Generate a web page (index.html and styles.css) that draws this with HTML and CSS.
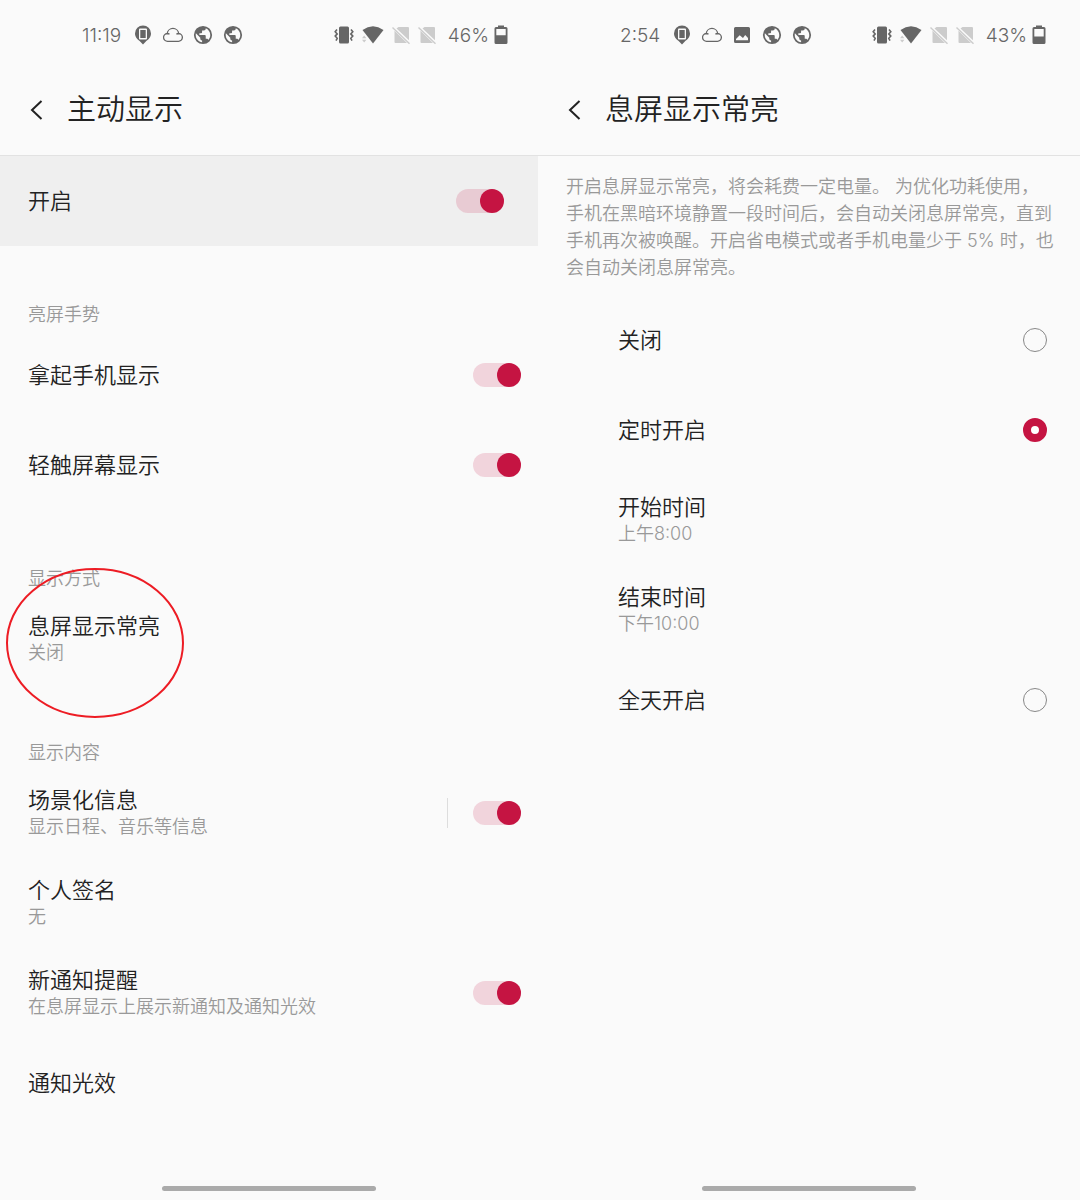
FILE: index.html
```html
<!DOCTYPE html>
<html lang="zh-CN">
<head>
  <meta charset="UTF-8" />
  <title>主动显示</title>
  <meta name="viewport" content="width=device-width, initial-scale=1.0" />
  <link rel="stylesheet" href="styles.css">
</head>
<body>

<!-- Icons -->
<svg class="sprite" aria-hidden="true">
  <symbol id="i-pin" viewBox="0 0 20 20">
    <path fill-rule="evenodd" d="M10 .5a8 8 0 0 0-8 8c0 4.200 3.200 6.300 5.600 8.400L10 19.500l2.400-2.600C14.800 14.800 18 12.700 18 8.500a8 8 0 0 0-8-8zM7 3.500h6q1 0 1 1v9q0 1-1 1H7q-1 0-1-1v-9q0-1 1-1zM7.300 5v8h5.400V5z"/>
    <path d="M8.300 5.800h3.400v6.400H8.300z"/>
  </symbol>
  <symbol id="i-cloud" viewBox="0 0 20 20">
    <path fill="none" stroke="currentColor" stroke-width="1.300" d="M4.800 16.300h10.400a3.900 3.900 0 0 0 .5-7.800 5.800 5.800 0 0 0-11.500 0 3.900 3.900 0 0 0 .6 7.800zM15.700 8.500c-1 0-1.700.2-2.300.7M4.200 8.500c1 0 1.700.2 2.300.7"/>
  </symbol>
  <symbol id="i-globe" viewBox="1 1 22 22">
    <path d="M17.900 17.390C17.640 16.590 16.890 16 16 16H15V13A1 1 0 0 0 14 12H8V10H10A1 1 0 0 0 11 9V7H13A2 2 0 0 0 15 5V4.590C17.930 5.770 20 8.640 20 12C20 14.080 19.200 15.970 17.900 17.390M11 19.930C7.050 19.440 4 16.080 4 12C4 11.380 4.080 10.780 4.210 10.210L9 15V16A2 2 0 0 0 11 18M12 2A10 10 0 0 0 2 12A10 10 0 0 0 12 22A10 10 0 0 0 22 12A10 10 0 0 0 12 2Z"/>
  </symbol>
  <symbol id="i-image" viewBox="0 0 20 20">
    <path fill-rule="evenodd" d="M3.500 2h13Q18 2 18 3.500v13q0 1.500-1.500 1.500h-13Q2 18 2 16.500v-13Q2 2 3.500 2zM4 15.300h12V13l-2.800-3-2.200 3-3.300-2.800L4 14z"/>
  </symbol>
  <symbol id="i-vibrate" viewBox="0 0 20 20">
    <rect x="5" y="1.500" width="10" height="17" rx="1.500"/>
    <path fill="none" stroke="currentColor" stroke-width="1.600" d="M3 4.500 1.200 6.700l2 2.200-2 2.200 2 2.200L2 15.600M17 4.500l1.800 2.200-2 2.200 2 2.200-2 2.200 1.200 2.300"/>
  </symbol>
  <symbol id="i-wifi" viewBox="0 0 22 20">
    <path d="M.5 5Q11-2.400 21.500 5L11 18.500z"/>
    <path fill="#ccc" d="M0 13.300l2.200-2.800 2.200 2.800zM0 14.700h4.400l-2.200 2.800z"/>
  </symbol>
  <symbol id="i-nosim" viewBox="0 0 18 20">
    <path fill="#ccc" d="M6.500 2H16q1 0 1 1v12.300L4.500 3.500zM2.500 5.800 15 18H3.500q-1 0-1-1z"/>
    <path fill="none" stroke="#ccc" stroke-width="1.400" d="M.5 2.500l17 16.300"/>
  </symbol>
  <symbol id="i-battery46" viewBox="0 0 14 20">
    <path fill-rule="evenodd" d="M4 .5h6V2h2q1.500 0 1.500 1.500v14Q13.500 19 12 19H2Q.5 19 .5 17.500v-14Q.5 2 2 2h2zM2.300 4v6.300h9.400V4z"/>
  </symbol>
  <symbol id="i-battery43" viewBox="0 0 14 20">
    <path fill-rule="evenodd" d="M4 .5h6V2h2q1.500 0 1.500 1.500v14Q13.500 19 12 19H2Q.5 19 .5 17.500v-14Q.5 2 2 2h2zM2.300 4v7.500h9.400V4z"/>
  </symbol>
  <symbol id="i-back" viewBox="0 0 20 22">
    <path fill="none" stroke="currentColor" stroke-width="2" d="M14.500 2 5 11l9.500 9"/>
  </symbol>
</svg>

<div class="screens">

  <!-- Ambient display -->
  <main class="phone">
    <div class="status">
      <span>11:19</span>
      <div class="notices">
        <svg class="icon"><use href="#i-pin"/></svg>
        <svg class="icon"><use href="#i-cloud"/></svg>
        <svg class="icon"><use href="#i-globe"/></svg>
        <svg class="icon"><use href="#i-globe"/></svg>
      </div>
      <div class="system">
        <svg class="icon"><use href="#i-vibrate"/></svg>
        <svg class="icon icon-wifi"><use href="#i-wifi"/></svg>
        <svg class="icon icon-sim"><use href="#i-nosim"/></svg>
        <svg class="icon icon-sim"><use href="#i-nosim"/></svg>
        <div class="charge">
          <span>46%</span>
          <svg class="icon icon-battery"><use href="#i-battery46"/></svg>
        </div>
      </div>
    </div>

    <header class="header">
      <button class="back" aria-label="返回"><svg class="back-icon"><use href="#i-back"/></svg></button>
      <h1>主动显示</h1>
    </header>

    <label class="row row-main">
      <span class="name">开启</span>
      <input class="switch" type="checkbox" checked>
    </label>

    <h2>亮屏手势</h2>
    <label class="row">
      <span class="name">拿起手机显示</span>
      <input class="switch" type="checkbox" checked>
    </label>
    <label class="row">
      <span class="name">轻触屏幕显示</span>
      <input class="switch" type="checkbox" checked>
    </label>

    <h2>显示方式</h2>
    <button class="row">
      <span class="text">
        <span class="name">息屏显示常亮</span>
        <span class="desc">关闭</span>
      </span>
      <svg class="mark" viewBox="0 0 178 150"><ellipse cx="89" cy="75" rx="88" ry="74"/></svg>
    </button>

    <h2>显示内容</h2>
    <label class="row">
      <span class="text">
        <span class="name">场景化信息</span>
        <span class="desc">显示日程、音乐等信息</span>
      </span>
      <span class="divider"></span>
      <input class="switch" type="checkbox" checked>
    </label>
    <button class="row">
      <span class="text">
        <span class="name">个人签名</span>
        <span class="desc">无</span>
      </span>
    </button>
    <label class="row">
      <span class="text">
        <span class="name">新通知提醒</span>
        <span class="desc">在息屏显示上展示新通知及通知光效</span>
      </span>
      <input class="switch" type="checkbox" checked>
    </label>
    <button class="row">
      <span class="name">通知光效</span>
    </button>

    <div class="home-bar"></div>
  </main>

  <!-- Always-on schedule -->
  <main class="phone phone-schedule">
    <div class="status">
      <span>2:54</span>
      <div class="notices">
        <svg class="icon"><use href="#i-pin"/></svg>
        <svg class="icon"><use href="#i-cloud"/></svg>
        <svg class="icon"><use href="#i-image"/></svg>
        <svg class="icon"><use href="#i-globe"/></svg>
        <svg class="icon"><use href="#i-globe"/></svg>
      </div>
      <div class="system">
        <svg class="icon"><use href="#i-vibrate"/></svg>
        <svg class="icon icon-wifi"><use href="#i-wifi"/></svg>
        <svg class="icon icon-sim"><use href="#i-nosim"/></svg>
        <svg class="icon icon-sim"><use href="#i-nosim"/></svg>
        <div class="charge">
          <span>43%</span>
          <svg class="icon icon-battery"><use href="#i-battery43"/></svg>
        </div>
      </div>
    </div>

    <header class="header">
      <button class="back" aria-label="返回"><svg class="back-icon"><use href="#i-back"/></svg></button>
      <h1>息屏显示常亮</h1>
    </header>

    <p class="intro">开启息屏显示常亮，将会耗费一定电量。 为优化功耗使用，手机在黑暗环境静置一段时间后，会自动关闭息屏常亮，直到手机再次被唤醒。开启省电模式或者手机电量少于 5% 时，也会自动关闭息屏常亮。</p>

    <label class="row">
      <span class="name">关闭</span>
      <input class="radio" type="radio" name="mode">
    </label>
    <label class="row">
      <span class="name">定时开启</span>
      <input class="radio" type="radio" name="mode" checked>
    </label>
    <button class="row">
      <span class="text">
        <span class="name">开始时间</span>
        <span class="desc">上午8:00</span>
      </span>
    </button>
    <button class="row">
      <span class="text">
        <span class="name">结束时间</span>
        <span class="desc">下午10:00</span>
      </span>
    </button>
    <label class="row">
      <span class="name">全天开启</span>
      <input class="radio" type="radio" name="mode">
    </label>

    <div class="home-bar"></div>
  </main>

</div>
</body>
</html>
```

FILE: styles.css
```css
* {
  box-sizing: border-box;
}

body {
  margin: 0;
  background: #fafafa;
  color: #222;
  font-family: Inter, "Noto Sans CJK SC", sans-serif;
  font-weight: 350;
}

button {
  border: none;
  background: none;
  padding: 0;
  color: inherit;
  font: inherit;
  text-align: left;
  cursor: pointer;
}

.sprite {
  position: absolute;
  width: 0;
  height: 0;
}

.screens {
  display: grid;
  grid-template-columns: 538fr 542fr;
  min-height: 100vh;
}

.phone {
  display: flex;
  flex-direction: column;
  min-width: 0;
}

/* status bar */
.status {
  display: flex;
  align-items: center;
  height: 70px;
  padding: 0 30px 0 82px;
  color: #666;
  font-size: 19px;
  font-weight: 300;
}

.phone-schedule .status {
  padding-right: 34px;
}

.notices {
  display: flex;
  gap: 10px;
  margin-left: 12px;
}

.system {
  display: flex;
  align-items: center;
  gap: 8px;
  margin-left: auto;
}

.charge {
  display: flex;
  align-items: center;
  gap: 5px;
  margin-left: 4px;
}

.icon {
  display: block;
  width: 20px;
  height: 20px;
  fill: currentColor;
}

.icon-wifi {
  width: 22px;
}

.icon-sim {
  width: 18px;
}

.icon-battery {
  width: 14px;
}

/* title */
.header {
  display: flex;
  align-items: center;
  gap: 20px;
  height: 86px;
  padding: 0 27px 6px;
  border-bottom: 1px solid #e2e2e2;
}

.back-icon {
  display: block;
  width: 20px;
  height: 22px;
}

h1 {
  margin: 0;
  font-size: 29px;
  line-height: 40px;
  font-weight: 350;
}

h2 {
  margin: 0;
  padding: 56px 28px 2px;
  color: #999;
  font-size: 18px;
  line-height: 26px;
  font-weight: 350;
}

/* settings */
.row {
  position: relative;
  display: flex;
  align-items: center;
  height: 90px;
  padding: 0 17px 0 28px;
}

.row-main {
  padding-right: 34px;
  background: #efefef;
}

.phone-schedule .row {
  padding: 0 33px 0 80px;
}

.text {
  display: flex;
  flex-direction: column;
}

.name {
  font-size: 22px;
  line-height: 28px;
}

.desc {
  color: #999;
  font-size: 18px;
  line-height: 26px;
}

.divider {
  width: 1px;
  height: 30px;
  margin: 0 25px 0 auto;
  background: #ddd;
}

.divider + .switch {
  margin-left: 0;
}

.switch {
  appearance: none;
  width: 48px;
  height: 24px;
  margin: 0 0 0 auto;
  border-radius: 12px;
  background: rgba(197, 20, 66, 0.16);
}

.switch::before {
  content: "";
  display: block;
  width: 24px;
  height: 24px;
  border-radius: 50%;
  background: #c51442;
}

.switch:checked::before {
  margin-left: auto;
}

.radio {
  appearance: none;
  width: 24px;
  height: 24px;
  margin: 0 0 0 auto;
  border: 1px solid #888;
  border-radius: 50%;
}

.radio:checked {
  border: 8px solid #c51442;
  background: #fff;
}

.mark {
  position: absolute;
  top: -26px;
  left: 6px;
  width: 178px;
  height: 150px;
  fill: none;
  stroke: #ed1c24;
  stroke-width: 2;
}

.intro {
  margin: 0;
  padding: 17px 25px 14px 28px;
  color: #999;
  font-size: 18px;
  line-height: 27px;
}

.home-bar {
  width: 214px;
  height: 5px;
  margin: auto auto 9px;
  border-radius: 3px;
  background: #aaa;
}
```
